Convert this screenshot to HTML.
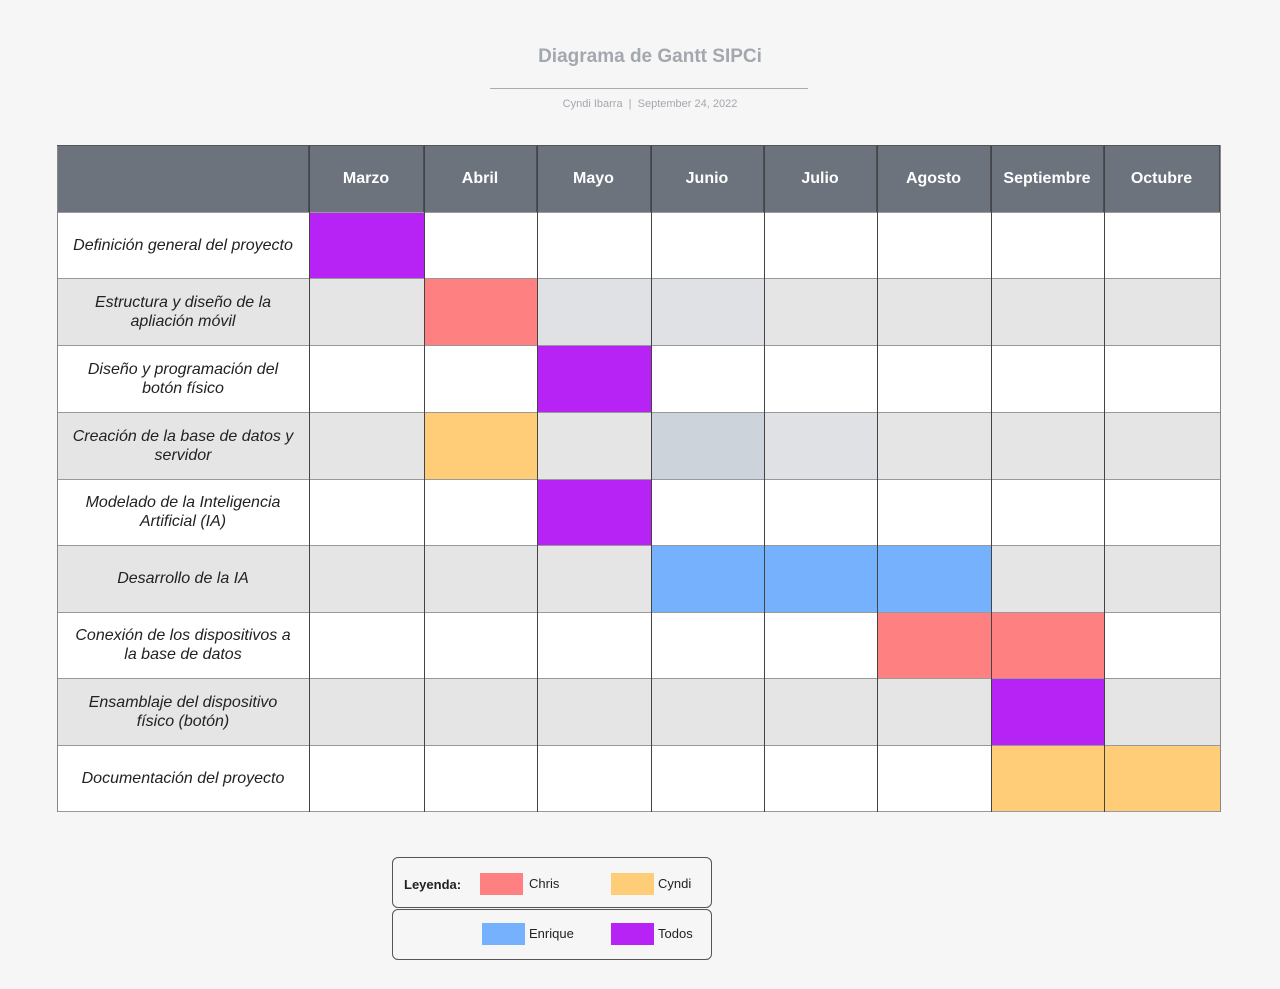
<!DOCTYPE html>
<html><head><meta charset="utf-8"><style>
body{margin:0;width:1280px;height:989px;background:#f6f6f6;font-family:"Liberation Sans",sans-serif;position:relative;overflow:hidden}
.c{position:absolute;box-sizing:border-box;display:flex;align-items:center;justify-content:center;text-align:center}
.h{background:#6c737c;color:#fff;font-weight:bold;font-size:16px;border-right:1px solid #4a4f55}
.l{font-style:italic;font-size:16px;color:#222;line-height:19px;padding:0 12px}
.g{background:#e5e5e5}.w{background:#fff}
.vl{position:absolute;width:1px;background:#444}
.hl{position:absolute;height:1px;background:#999;left:57px;width:1163px}
.sw{position:absolute;width:43px;height:22px}
.lt{position:absolute;font-size:13px;color:#222}
</style></head><body>
<div class="c" style="left:0;width:1300px;top:44px;height:26px;font-size:19px;font-weight:bold;color:#a3a7ae">Diagrama de Gantt SIPCi</div>
<div style="position:absolute;left:490px;width:318px;top:88px;height:1px;background:#a8abb2"></div>
<div class="c" style="left:0;width:1300px;top:96px;height:16px;font-size:11px;color:#a3a7ae">Cyndi Ibarra &nbsp;|&nbsp; September 24, 2022</div>
<div id="t"></div>
<div style="position:absolute;left:392px;top:857px;width:320px;height:51px;border:1px solid #555;border-radius:6px;box-sizing:border-box"></div>
<div style="position:absolute;left:392px;top:909px;width:320px;height:51px;border:1px solid #555;border-radius:6px;box-sizing:border-box"></div>
<div class="lt" style="left:404px;top:877px;font-weight:bold">Leyenda:</div>
<div class="sw" style="left:480px;top:873px;background:#ff8080"></div><div class="lt" style="left:529px;top:876px">Chris</div>
<div class="sw" style="left:611px;top:873px;background:#ffcc77"></div><div class="lt" style="left:658px;top:876px">Cyndi</div>
<div class="sw" style="left:482px;top:923px;background:#75b1fd"></div><div class="lt" style="left:529px;top:926px">Enrique</div>
<div class="sw" style="left:611px;top:923px;background:#b723f5"></div><div class="lt" style="left:658px;top:926px">Todos</div>
<script>
var X=[57,309,424,537,651,764,877,991,1104,1220],Y=[145,212,278,345,412,479,545,612,678,745,811];
var M=["","Marzo","Abril","Mayo","Junio","Julio","Agosto","Septiembre","Octubre"];
var L=["Definición general del proyecto","Estructura y diseño de la apliación móvil","Diseño y programación del botón físico","Creación de la base de datos y servidor","Modelado de la Inteligencia Artificial (IA)","Desarrollo de la IA","Conexión de los dispositivos a la base de datos","Ensamblaje del dispositivo físico (botón)","Documentación del proyecto"];
var P="#b723f5",R="#ff8080",Yc="#ffcc77",B="#75b1fd";
var F={"0,1":P,"1,2":R,"1,3":"#dfe1e5","1,4":"#dfe1e5","2,3":P,"3,2":Yc,"3,4":"#ccd3db","3,5":"#dfe1e5","4,3":P,"5,4":B,"5,5":B,"5,6":B,"6,6":R,"6,7":R,"7,7":P,"8,7":Yc,"8,8":Yc};
var h="";
for(var j=0;j<9;j++)h+='<div class="c h" style="left:'+X[j]+'px;top:145px;width:'+(X[j+1]-X[j])+'px;height:67px">'+M[j]+'</div>';
for(var i=0;i<9;i++){for(var j=0;j<9;j++){var bg=F[i+","+j]||(i%2?"#e5e5e5":"#fff");
h+='<div class="c'+(j==0?' l':'')+'" style="left:'+X[j]+'px;top:'+Y[i+1]+'px;width:'+(X[j+1]-X[j])+'px;height:'+(Y[i+2]-Y[i+1])+'px;background:'+bg+'">'+(j==0?L[i]:'')+'</div>';}}
for(var i=1;i<11;i++)h+='<div class="hl" style="top:'+Y[i]+'px"></div>';
for(var j=0;j<10;j++)h+='<div class="vl" style="left:'+X[j]+'px;top:145px;height:667px;background:'+(j==0||j==9?'#888':'#444')+'"></div>';
h+='<div class="hl" style="top:145px;background:#555"></div>';
document.getElementById("t").innerHTML=h;
</script>
</body></html>
